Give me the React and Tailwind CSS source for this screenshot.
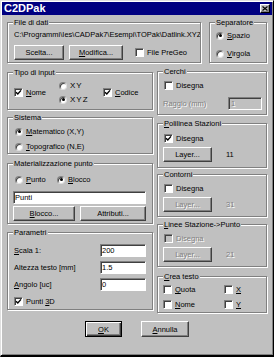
import React from "react";

const dis = "text-[#808080] [text-shadow:1px_1px_0_#fff]";

function Group({ title, className = "", children }) {
  return (
    <div className={`relative border border-[#808080] shadow-[inset_1px_1px_0_#fff,1px_1px_0_#fff] ${className}`}>
      <span className="absolute -top-[5px] left-[5px] bg-[#c0c0c0] px-[1px] leading-[9px] whitespace-nowrap">
        {title}
      </span>
      {children}
    </div>
  );
}

function Box({ checked, disabled }) {
  return (
    <span
      className={`flex h-[9px] w-[9px] shrink-0 items-center justify-center border border-t-[#808080] border-l-[#808080] border-b-white border-r-white shadow-[inset_1px_1px_0_#404040] ${
        disabled ? "bg-[#c0c0c0]" : "bg-white"
      }`}
    >
      {checked && (
        <svg width="7" height="7" viewBox="0 0 7 7">
          <path d="M1 3.2 L2.8 5 L6 1.4" fill="none" stroke="#000" strokeWidth="1.4" />
        </svg>
      )}
    </span>
  );
}

function Check({ checked, disabled, label, className = "" }) {
  return (
    <div className={`flex h-[9px] items-center gap-[3px] ${className}`}>
      <Box checked={checked} disabled={disabled} />
      <span className={`whitespace-nowrap ${disabled ? dis : ""}`}>{label}</span>
    </div>
  );
}

function Radio({ checked, label, className = "", labelClass = "" }) {
  return (
    <div className={`flex h-[9px] items-center gap-[3px] ${className}`}>
      <span className="flex h-[8px] w-[8px] shrink-0 items-center justify-center rounded-full border border-[#808080] border-b-[#dfdfdf] border-r-[#dfdfdf] bg-white shadow-[inset_1px_1px_0_#404040]">
        {checked && <span className="h-[3px] w-[3px] rounded-full bg-black" />}
      </span>
      <span className={`whitespace-nowrap ${labelClass}`}>{label}</span>
    </div>
  );
}

function Btn({ disabled, className = "", children }) {
  return (
    <div
      className={`flex items-center justify-center border border-t-white border-l-white border-r-[#404040] border-b-[#404040] shadow-[inset_-1px_-1px_0_#808080] whitespace-nowrap ${
        disabled ? dis : ""
      } ${className}`}
    >
      {children}
    </div>
  );
}

function Field({ disabled, className = "", children }) {
  return (
    <div
      className={`flex h-[13px] items-center border border-t-[#808080] border-l-[#808080] border-b-white border-r-white pl-[1px] shadow-[inset_1px_1px_0_#404040] ${
        disabled ? "bg-[#c0c0c0] " + dis : "bg-white"
      } ${className}`}
    >
      {children}
    </div>
  );
}

export default function App() {
  return (
    <div className="h-[357px] w-[274px] overflow-hidden border border-b-2 border-t-[#dfdfdf] border-l-[#dfdfdf] border-r-black border-b-black bg-[#c0c0c0] p-[1px] font-['Liberation_Sans',Arial,sans-serif] text-[7.5px] leading-[9px] text-black shadow-[inset_1px_1px_0_#fff,inset_-1px_-1px_0_#808080]">
      {/* Title bar */}
      <div className="flex h-[13px] items-center justify-between bg-[#000080] px-[2px]">
        <span className="text-[11px] font-bold leading-[13px] text-white">C2DPak</span>
        <div className="flex h-[9px] w-[10px] items-center justify-center border border-t-white border-l-white border-r-black border-b-black bg-[#c0c0c0] shadow-[inset_-1px_-1px_0_#808080]">
          <svg width="6" height="5" viewBox="0 0 6 5">
            <path d="M0.5 0.5 L5.5 4.5 M5.5 0.5 L0.5 4.5" stroke="#000" strokeWidth="1.2" />
          </svg>
        </div>
      </div>

      <div className="pl-[5px]">
        {/* Top row */}
        <div className="mt-[7px] flex">
          <Group title="File di dati" className="h-[41px] w-[194px]">
            <div className="ml-[6px] mt-[7px] h-[9px] w-[186px] overflow-hidden whitespace-nowrap">
              {"C:\\Programmi\\Ies\\CADPak7\\Esempi\\TOPak\\Datlink.XYZ"}
            </div>
            <div className="ml-[6px] mt-[6px] flex items-center">
              <Btn className="h-[15px] w-[50px]">Scelta...</Btn>
              <Btn className="ml-[5px] h-[15px] w-[54px]">
                <u>M</u>odifica...
              </Btn>
              <Check className="ml-[12px]" label="File PreGeo" />
            </div>
          </Group>
          <Group title="Separatore" className="ml-[8px] h-[41px] w-[58px]">
            <Radio className="ml-[6px] mt-[8px]" checked label={<><u>S</u>pazio</>} />
            <Radio className="ml-[6px] mt-[9px]" label={<><u>V</u>irgola</>} />
          </Group>
        </div>

        {/* Columns */}
        <div className="flex items-start">
          <div className="flex w-[146px] flex-col">
            <Group title="Tipo di input" className="mt-[9px] h-[38px]">
              <div className="ml-[6px] mt-[8px] flex items-center">
                <Check className="w-[45px]" checked label={<><u>N</u>ome</>} />
                <div className="w-[44px]">
                  <Radio label="XY" labelClass="text-[8px] tracking-[1px]" />
                  <Radio className="mt-[5px]" checked label="XYZ" labelClass="text-[8px] tracking-[1px]" />
                </div>
                <Check checked label={<><u>C</u>odice</>} />
              </div>
            </Group>

            <Group title="Sistema" className="mt-[7px] h-[37px]">
              <Radio className="ml-[7px] mt-[9px]" checked label={<><u>M</u>atematico (X,Y)</>} />
              <Radio className="ml-[7px] mt-[6px]" label={<><u>T</u>opografico (N,E)</>} />
            </Group>

            <Group title="Materializzazione punto" className="mt-[9px] h-[61px]">
              <div className="ml-[7px] mt-[11px] flex">
                <Radio className="w-[42px]" label={<><u>P</u>unto</>} />
                <Radio checked label={<><u>B</u>locco</>} />
              </div>
              <Field className="ml-[5px] mt-[7px] w-[133px]">Punti</Field>
              <div className="ml-[5px] mt-[2px] flex">
                <Btn className="h-[15px] w-[62px]">
                  <u>B</u>locco...
                </Btn>
                <Btn className="ml-[5px] h-[15px] w-[66px]">Attributi...</Btn>
              </div>
            </Group>

            <Group title="Parametri" className="mt-[8px] h-[78px]">
              <div className="ml-[6px] mt-[11px] flex items-center">
                <span className="w-[86px]">
                  <u>S</u>cala 1:
                </span>
                <Field className="w-[46px]">200</Field>
              </div>
              <div className="ml-[6px] mt-[4px] flex items-center">
                <span className="w-[86px]">Altezza testo [mm]</span>
                <Field className="w-[46px]">1.5</Field>
              </div>
              <div className="ml-[6px] mt-[4px] flex items-center">
                <span className="w-[86px]">
                  <u>A</u>ngolo [uc]
                </span>
                <Field className="w-[46px]">0</Field>
              </div>
              <Check className="ml-[6px] mt-[6px]" checked label={<>Punti <u>3</u>D</>} />
            </Group>
          </div>

          <div className="ml-[4px] flex w-[110px] flex-col">
            <Group title="Cerchi" className="mt-[8px] h-[44px]">
              <Check className="ml-[6px] mt-[9px]" label="Disegna" />
              <div className="ml-[5px] mt-[7px] flex items-center">
                <span className={`w-[65px] ${dis}`}>Raggio (mm)</span>
                <Field disabled className="w-[34px] pl-[2px]">1</Field>
              </div>
            </Group>

            <Group title={<><u>P</u>olilinea Stazioni</>} className="mt-[8px] h-[45px]">
              <Check className="ml-[6px] mt-[10px]" checked label="Disegna" />
              <div className="ml-[5px] mt-[4px] flex items-center">
                <Btn className="h-[15px] w-[49px]">Layer...</Btn>
                <span className="ml-[14px]">11</span>
              </div>
            </Group>

            <Group title="Contorni" className="mt-[6px] h-[43px]">
              <Check className="ml-[6px] mt-[9px]" label="Disegna" />
              <div className="ml-[5px] mt-[4px] flex items-center">
                <Btn disabled className="h-[15px] w-[49px]">Layer...</Btn>
                <span className={`ml-[14px] ${dis}`}>31</span>
              </div>
            </Group>

            <Group title={<><u>L</u>inee Stazione-&gt;Punto</>} className="mt-[7px] h-[43px]">
              <Check className="ml-[6px] mt-[9px]" disabled label="Disegna" />
              <div className="ml-[5px] mt-[4px] flex items-center">
                <Btn disabled className="h-[15px] w-[49px]">Layer...</Btn>
                <span className={`ml-[14px] ${dis}`}>21</span>
              </div>
            </Group>

            <Group title={<><u>C</u>rea testo</>} className="mt-[9px] h-[37px]">
              <div className="ml-[5px] mt-[8px] grid grid-cols-[61px_1fr] gap-y-[6px]">
                <Check label={<><u>Q</u>uota</>} />
                <Check label={<u>X</u>} />
                <Check label={<><u>N</u>ome</>} />
                <Check label={<u>Y</u>} />
              </div>
            </Group>
          </div>
        </div>

        {/* Dialog buttons */}
        <div className="mt-[8px] flex">
          <div className="ml-[78px] flex h-[16px] w-[37px] items-center justify-center border border-black shadow-[inset_1px_1px_0_#fff,inset_-1px_-1px_0_#404040,inset_-2px_-2px_0_#808080]">
            <u>O</u>K
          </div>
          <Btn className="ml-[19px] h-[16px] w-[48px]">
            <u>A</u>nnulla
          </Btn>
        </div>
      </div>
    </div>
  );
}
